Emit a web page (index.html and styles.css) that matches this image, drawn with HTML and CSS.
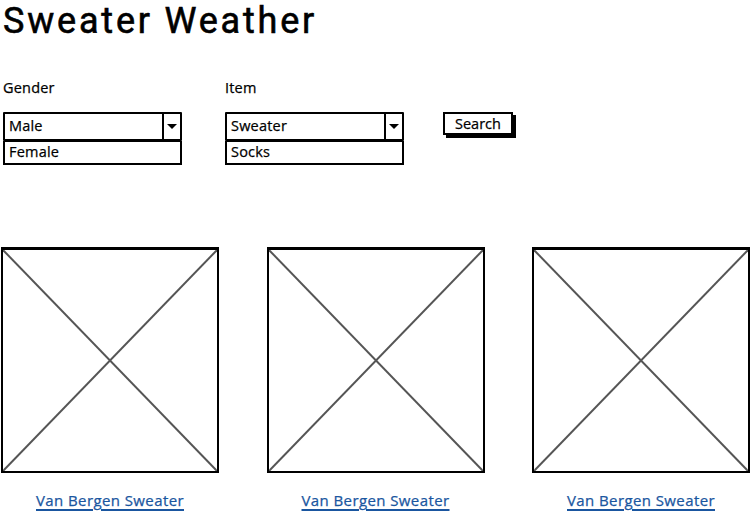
FILE: index.html
```html
<!DOCTYPE html>
<html>
<head>
<meta charset="utf-8">
<link rel="stylesheet" href="styles.css">
</head>
<body>
<div class="page">
  <h1 class="title">Sweater Weather</h1>
  <div class="filters">
    <div class="field field-gender">
      <div class="label">Gender</div>
      <div class="select">
        <span class="select-value">Male</span>
        <span class="select-btn"><span class="arrow"></span></span>
      </div>
      <div class="option">Female</div>
    </div>
    <div class="field field-item">
      <div class="label">Item</div>
      <div class="select">
        <span class="select-value">Sweater</span>
        <span class="select-btn"><span class="arrow"></span></span>
      </div>
      <div class="option">Socks</div>
    </div>
    <div class="search-wrap">
      <button class="search">Search</button>
    </div>
  </div>
  <div class="gallery">
    <div class="card">
      <div class="ph">
        <svg viewBox="0 0 100 100" preserveAspectRatio="none"><line x1="0" y1="0" x2="100" y2="100"/><line x1="100" y1="0" x2="0" y2="100"/></svg>
      </div>
      <a class="caption" href="#">Van Bergen Sweater</a>
    </div>
    <div class="card">
      <div class="ph">
        <svg viewBox="0 0 100 100" preserveAspectRatio="none"><line x1="0" y1="0" x2="100" y2="100"/><line x1="100" y1="0" x2="0" y2="100"/></svg>
      </div>
      <a class="caption" href="#">Van Bergen Sweater</a>
    </div>
    <div class="card">
      <div class="ph">
        <svg viewBox="0 0 100 100" preserveAspectRatio="none"><line x1="0" y1="0" x2="100" y2="100"/><line x1="100" y1="0" x2="0" y2="100"/></svg>
      </div>
      <a class="caption" href="#">Van Bergen Sweater</a>
    </div>
  </div>
</div>
</body>
</html>
```
FILE: styles.css
```css
* { box-sizing: border-box; }
html, body { margin: 0; padding: 0; background: #fff; }
body {
  font-family: "Open Sans", "Liberation Sans", sans-serif;
  color: #000;
  width: 750px;
  height: 513px;
  overflow: hidden;
  -webkit-text-stroke: 0.25px currentColor;
}
.page {
  padding: 0 0 0 1px;
}
.title {
  margin: 0;
  padding: 0 0 0 2px;
  font-family: Roboto, "Liberation Sans", sans-serif;
  font-weight: 400;
  font-size: 36px;
  line-height: 42px;
  letter-spacing: 2.8px;
  -webkit-text-stroke: 0.6px #000;
}
.filters {
  display: flex;
  margin-top: 36px;
  padding-left: 2px;
}
.field { display: flex; flex-direction: column; width: 179px; }
.field-item { margin-left: 43px; }
.label {
  font-size: 14.5px;
  line-height: 20px;
  height: 20px;
  margin-bottom: 14px;
  letter-spacing: 0.2px;
}
.select {
  display: flex;
  height: 29px;
  border: 2px solid #000;
  border-radius: 1px;
}
.select-value {
  flex: 1;
  font-size: 14.5px;
  line-height: 24px;
  padding-left: 4px;
  letter-spacing: 0.2px;
}
.select-btn {
  width: 18px;
  border-left: 2px solid #000;
  display: flex;
  align-items: center;
  justify-content: center;
}
.arrow {
  width: 0; height: 0;
  border-left: 5px solid transparent;
  border-right: 5px solid transparent;
  border-top: 5px solid #000;
}
.option {
  height: 24px;
  margin-top: 0;
  border: 2px solid #000;
  border-top-width: 1px;
  font-size: 14.5px;
  line-height: 20px;
  padding-left: 4px;
  letter-spacing: 0.2px;
}
.search-wrap { margin-left: 39px; padding-top: 34px; }
.search {
  font-family: inherit;
  font-size: 14.5px;
  line-height: 17px;
  height: 23px;
  width: 70px;
  padding: 0;
  background: #fff;
  border: 2px solid #000;
  border-radius: 0;
  box-shadow: 3px 3px 0 #000;
  color: #000;
  -webkit-text-stroke: 0.25px #000;
}
.gallery {
  display: flex;
  justify-content: space-between;
  margin-top: 82px;
}
.card {
  width: 218px;
  display: flex;
  flex-direction: column;
  align-items: center;
}
.ph {
  width: 218px;
  height: 226px;
  border: 2px solid #000;
  border-top-width: 3px;
}
.ph svg { display: block; width: 100%; height: 100%; }
.ph line { stroke: #555; stroke-width: 2; vector-effect: non-scaling-stroke; }
.caption {
  margin-top: 17px;
  font-size: 15px;
  line-height: 20px;
  letter-spacing: 0.4px;
  color: #1a56a0;
  text-decoration: underline;
  text-underline-offset: 3px;
  text-decoration-thickness: 2px;
}
```
